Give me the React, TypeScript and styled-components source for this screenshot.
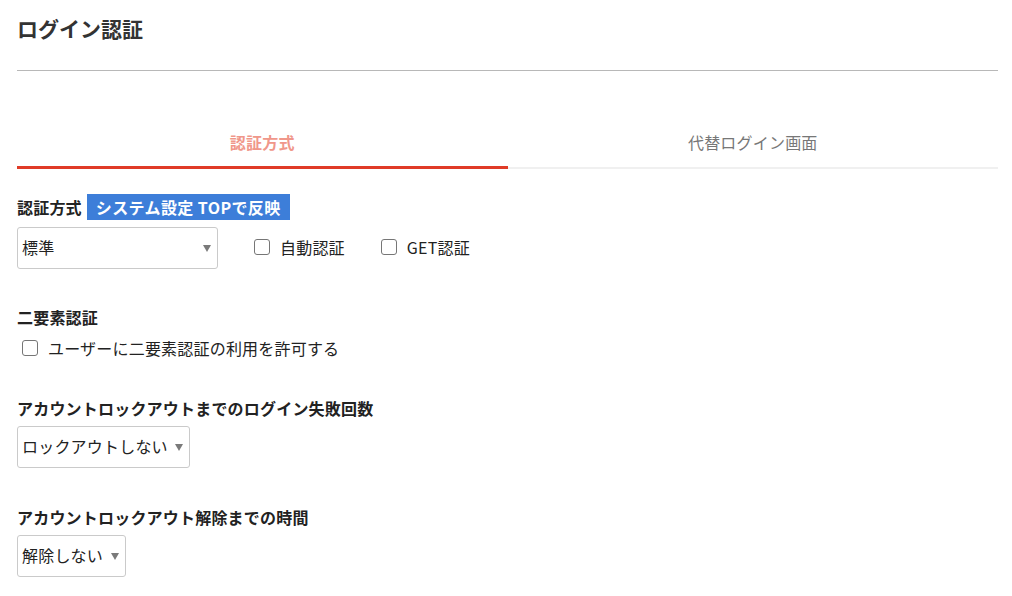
import React from "react";
import styled, { createGlobalStyle } from "styled-components";

const Global = createGlobalStyle`
  html, body { margin: 0; padding: 0; background: #fff; }
  body {
    font-family: "Noto Sans CJK JP", "Noto Sans", sans-serif;
    color: #333;
    -webkit-font-smoothing: antialiased;
  }
  * { box-sizing: border-box; }
`;

const Page = styled.div`
  width: 1012px;
  padding: 0 14px 0 17px;
`;

const Header = styled.header`
  height: 71px;
  padding-top: 13px;
  border-bottom: 1px solid #b8b8b8;
`;

const Title = styled.h1`
  margin: 0;
  font-size: 21px;
  line-height: 30px;
  font-weight: 700;
  color: #333;
`;

const TabList = styled.div`
  display: grid;
  grid-template-columns: 1fr 1fr;
  align-items: end;
  margin-top: 47px;
`;

const Tab = styled.button<{ $active?: boolean }>`
  all: unset;
  text-align: center;
  font-family: inherit;
  font-size: 16px;
  line-height: 24px;
  letter-spacing: 0.2px;
  padding: 12px 0 ${(p) => (p.$active ? 12 : 13)}px;
  cursor: pointer;
  color: ${(p) => (p.$active ? "#f0978a" : "#777")};
  font-weight: ${(p) => (p.$active ? 700 : 400)};
  border-bottom: ${(p) => (p.$active ? "3px solid #e03b27" : "2px solid #f0f0f0")};
`;

const Section = styled.section<{ $top: number }>`
  margin-top: ${(p) => p.$top}px;
`;

const LabelRow = styled.div`
  display: flex;
  align-items: center;
  gap: 5px;
  height: 26px;
`;

const Label = styled.div`
  font-size: 16px;
  line-height: 24px;
  font-weight: 700;
  letter-spacing: 0.2px;
  color: #222;
`;

const Badge = styled.span`
  display: inline-block;
  background: #3d7ed9;
  color: #fff;
  font-size: 16px;
  font-weight: 700;
  line-height: 26px;
  letter-spacing: 0.4px;
  padding: 0 9px;
`;

const Row = styled.div<{ $top: number }>`
  display: flex;
  align-items: center;
  margin-top: ${(p) => p.$top}px;
`;

const SelectWrap = styled.div<{ $width: number }>`
  position: relative;
  width: ${(p) => p.$width}px;
  height: 42px;
  &::after {
    content: "";
    position: absolute;
    right: 7px;
    top: 18px;
    border-left: 4.5px solid transparent;
    border-right: 4.5px solid transparent;
    border-top: 7px solid #7a7a7a;
    pointer-events: none;
  }
`;

const Select = styled.select`
  appearance: none;
  -webkit-appearance: none;
  width: 100%;
  height: 100%;
  border: 1px solid #cacaca;
  border-radius: 3px;
  background: #fff;
  padding: 0 20px 2px 4px;
  font-family: inherit;
  font-size: 16px;
  letter-spacing: 0.2px;
  color: #222;
  outline: none;
`;

const CheckLabel = styled.label<{ $left: number }>`
  display: inline-flex;
  align-items: center;
  gap: 10px;
  margin-left: ${(p) => p.$left}px;
  font-size: 16px;
  line-height: 24px;
  letter-spacing: 0.2px;
  color: #222;
  cursor: pointer;
  transform: translateY(-1px);
`;

const Check = styled.input.attrs({ type: "checkbox" })`
  appearance: none;
  -webkit-appearance: none;
  margin: 0;
  width: 16px;
  height: 16px;
  border: 1px solid #767676;
  border-radius: 3px;
  background: #fff;
`;

export default function App() {
  return (
    <>
      <Global />
      <Page>
        <Header>
          <Title>ログイン認証</Title>
        </Header>
        <TabList>
          <Tab $active>認証方式</Tab>
          <Tab>代替ログイン画面</Tab>
        </TabList>

        <Section $top={25}>
          <LabelRow>
            <Label>認証方式</Label>
            <Badge>システム設定 TOPで反映</Badge>
          </LabelRow>
          <Row $top={7}>
            <SelectWrap $width={201}>
              <Select defaultValue="std">
                <option value="std">標準</option>
              </Select>
            </SelectWrap>
            <CheckLabel $left={36}>
              <Check />
              自動認証
            </CheckLabel>
            <CheckLabel $left={36}>
              <Check />
              GET認証
            </CheckLabel>
          </Row>
        </Section>

        <Section $top={36}>
          <Label>二要素認証</Label>
          <Row $top={8}>
            <CheckLabel $left={5}>
              <Check />
              ユーザーに二要素認証の利用を許可する
            </CheckLabel>
          </Row>
        </Section>

        <Section $top={35}>
          <Label>アカウントロックアウトまでのログイン失敗回数</Label>
          <Row $top={6}>
            <SelectWrap $width={173}>
              <Select defaultValue="none">
                <option value="none">ロックアウトしない</option>
              </Select>
            </SelectWrap>
          </Row>
        </Section>

        <Section $top={37}>
          <Label>アカウントロックアウト解除までの時間</Label>
          <Row $top={6}>
            <SelectWrap $width={109}>
              <Select defaultValue="none">
                <option value="none">解除しない</option>
              </Select>
            </SelectWrap>
          </Row>
        </Section>
      </Page>
    </>
  );
}
